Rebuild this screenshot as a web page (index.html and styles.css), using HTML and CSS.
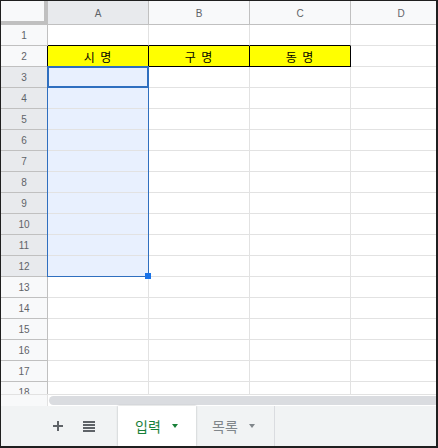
FILE: index.html
```html
<!DOCTYPE html>
<html lang="ko">
<head>
<meta charset="utf-8">
<title>Sheet</title>
<link rel="stylesheet" href="styles.css">
</head>
<body>
<div class="frame">
  <div class="sheet">
    <div class="grid">
      <div class="corner"></div><div class="ch sel">A</div><div class="ch">B</div><div class="ch">C</div><div class="ch">D</div>
      <div class="rh">1</div><div class="top"></div><div class="top"></div><div class="top"></div><div></div>
      <div class="rh hl-left">2</div><div class="hl">시 명</div><div class="hl">구 명</div><div class="hl">동 명</div><div></div>
      <div class="rh sel">3</div><div class="sc"></div><div></div><div></div><div></div>
      <div class="rh sel">4</div><div class="sc"></div><div></div><div></div><div></div>
      <div class="rh sel">5</div><div class="sc"></div><div></div><div></div><div></div>
      <div class="rh sel">6</div><div class="sc"></div><div></div><div></div><div></div>
      <div class="rh sel">7</div><div class="sc"></div><div></div><div></div><div></div>
      <div class="rh sel">8</div><div class="sc"></div><div></div><div></div><div></div>
      <div class="rh sel">9</div><div class="sc"></div><div></div><div></div><div></div>
      <div class="rh sel">10</div><div class="sc"></div><div></div><div></div><div></div>
      <div class="rh sel">11</div><div class="sc"></div><div></div><div></div><div></div>
      <div class="rh sel">12</div><div class="sc"></div><div></div><div></div><div></div>
      <div class="rh">13</div><div></div><div></div><div></div><div></div>
      <div class="rh">14</div><div></div><div></div><div></div><div></div>
      <div class="rh">15</div><div></div><div></div><div></div><div></div>
      <div class="rh">16</div><div></div><div></div><div></div><div></div>
      <div class="rh">17</div><div></div><div></div><div></div><div></div>
      <div class="rh">18</div><div></div><div></div><div></div><div></div>
    </div>
    <div class="range"></div>
    <div class="cursor-cell"></div>
    <div class="handle"></div>
  </div>
  <div class="hscroll">
    <div class="gutter"></div>
    <div class="track"><div class="thumb"></div></div>
  </div>
  <div class="tabbar">
    <div class="tools">
      <svg class="plus" width="10" height="10" viewBox="0 0 10 10"><path d="M5 0V10M0 5H10" stroke="#5f6368" stroke-width="2"/></svg>
      <svg class="menu" width="12" height="11" viewBox="0 0 12 11"><rect x="0" y="0" width="12" height="2" fill="#5f6368"/><rect x="0" y="3" width="12" height="2" fill="#5f6368"/><rect x="0" y="6" width="12" height="2" fill="#5f6368"/><rect x="0" y="9" width="12" height="2" fill="#5f6368"/></svg>
    </div>
    <div class="tab tab-on"><span>입력</span><span class="arrow"></span></div>
    <div class="tab"><span>목록</span><span class="arrow"></span></div>
  </div>
</div>
</body>
</html>
```

FILE: styles.css
```css
* { box-sizing: border-box; }
html, body { margin: 0; padding: 0; background: #fff; }

.frame {
  width: 438px;
  height: 448px;
  border-style: solid;
  border-color: #1f1f1f;
  border-width: 1px 2px 2px 1px;
  display: flex;
  flex-direction: column;
  overflow: hidden;
}

.sheet {
  position: relative;
  height: 393px;
  flex: none;
  overflow: hidden;
}

.grid {
  display: grid;
  grid-template-columns: 47px repeat(4, 101px);
  grid-template-rows: 24px repeat(18, 21px);
  width: 451px;
  font-family: "Liberation Sans", Arial, sans-serif;
  font-size: 10px;
  color: #5f6368;
}

.grid > div {
  display: flex;
  align-items: center;
  justify-content: center;
  border-right: 1px solid #e2e2e2;
  border-bottom: 1px solid #e2e2e2;
  overflow: hidden;
  white-space: nowrap;
}

.grid > .corner {
  background: #f8f9fa;
  border-right: 4px solid #c0c0c0;
  border-bottom: 4px solid #c0c0c0;
}

.grid > .ch {
  background: #f8f9fa;
  border-right-color: #c0c0c0;
  border-bottom-color: #c0c0c0;
  padding-top: 1px;
}
.grid > .ch.sel { background: #e8eaed; }

.grid > .rh {
  background: #f8f9fa;
  border-right-color: #c0c0c0;
  border-bottom-color: #c0c0c0;
}
.grid > .rh.sel { background: #e8eaed; }
.grid > .rh.hl-left { border-right-color: #000; }

.grid > .top { border-bottom-color: #000; }

.grid > .hl {
  background: #ffff00;
  border-right-color: #000;
  border-bottom-color: #000;
  color: #000;
  font-family: "Noto Sans CJK KR", "Liberation Sans", sans-serif;
  font-size: 12px;
  letter-spacing: 1px;
}

.grid > .sc { background: #e8f0fe; }

.range {
  position: absolute;
  left: 46px;
  top: 65px;
  width: 102px;
  height: 211px;
  border: 1px solid #2f6fbf;
}
.cursor-cell {
  position: absolute;
  left: 46px;
  top: 65px;
  width: 102px;
  height: 22px;
  border: 2px solid #2f6fbf;
}
.handle {
  position: absolute;
  left: 144px;
  top: 272px;
  width: 6px;
  height: 6px;
  background: #1a73e8;
}

.hscroll {
  height: 12px;
  flex: none;
  display: flex;
  border-top: 1px solid #e2e2e2;
}
.gutter {
  width: 47px;
  background: #f8f9fa;
  border-right: 1px solid #e2e2e2;
}
.track {
  flex: 1;
  padding: 1px 0 1px 1px;
  background: #fff;
}
.thumb {
  height: 9px;
  background: #dadce0;
  border-radius: 5px 0 0 5px;
}

.tabbar {
  height: 40px;
  flex: none;
  display: flex;
  background: #f1f3f4;
  font-family: "Noto Sans CJK KR", "Liberation Sans", sans-serif;
  font-size: 14px;
}
.tools {
  width: 117px;
  display: flex;
  align-items: center;
  padding-left: 52px;
  gap: 20px;
}
.tools svg { display: block; }

.tab {
  width: 79px;
  display: flex;
  align-items: center;
  padding-left: 16px;
  color: #80868b;
  border-right: 1px solid #dadce0;
}
.tab-on {
  width: 78px;
  padding-left: 17px;
  background: #fff;
  color: #188038;
  border-right: none;
  box-shadow: 0 0 2px rgba(60, 64, 67, 0.35);
}
.arrow {
  width: 0;
  height: 0;
  margin-left: 11px;
  border-left: 3px solid transparent;
  border-right: 3px solid transparent;
  border-top: 4px solid currentColor;
}
```
